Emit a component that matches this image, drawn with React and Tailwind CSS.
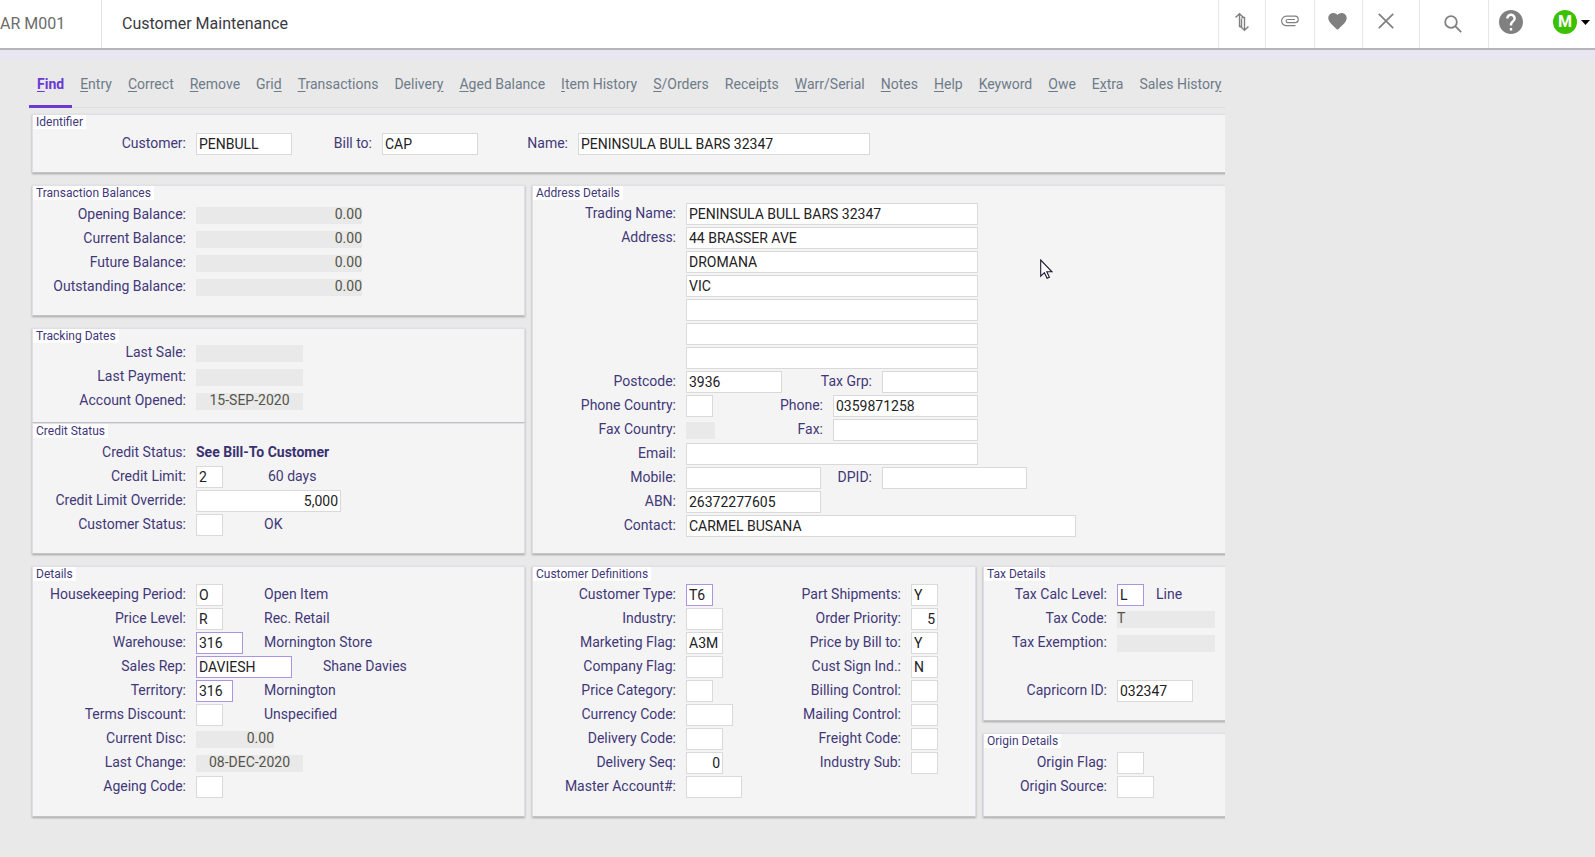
import React, { useId } from "react";

function Label({ htmlFor, width, children }) {
  return (
    <label htmlFor={htmlFor} className={`${width} shrink-0 pr-2.5 pb-0.5 text-right whitespace-nowrap text-[#423879]`}>
      {children}
    </label>
  );
}

/* An editable box, or a flat grey box when `locked`. */
function Field({ label, lw, w, value = "", right, center, locked, link }) {
  const id = useId();
  const align = right ? "text-right" : center ? "text-center" : "text-left";
  const look = locked
    ? "h-[17px] bg-[#e9e9e9] pb-0.5 text-[#55554a]"
    : `h-[22px] border px-0.5 bg-white text-[#222222] ${link ? "border-[#ab94e2]" : "border-[#d9d9d9]"}`;
  return (
    <>
      <Label htmlFor={id} width={lw}>{label}</Label>
      <input
        id={id}
        aria-label={label || "Address line"}
        defaultValue={value}
        readOnly={locked}
        className={`${w} ${look} ${align} shrink-0 outline-none`}
      />
    </>
  );
}

function Row({ children }) {
  return <div className="flex h-6 items-center">{children}</div>;
}

function Hint({ gap = "ml-[41px]", children }) {
  return <span className={`${gap} pb-0.5 whitespace-nowrap text-[#423879]`}>{children}</span>;
}

function Panel({ title, pad = "pt-[17px] pb-4", className = "", children }) {
  return (
    <section
      className={`relative border border-[#dfdfe5] border-b-[#c4c4c8] bg-[#f4f4f4] shadow-[0_1px_2px_rgba(0,0,0,0.3)] ${pad} ${className}`}
    >
      <h2 className="absolute top-0 left-0 bg-white px-[3px] text-[12px] leading-[14px] text-[#423879]">{title}</h2>
      {children}
    </section>
  );
}

const TABS = [
  ["", "F", "ind"],
  ["", "E", "ntry"],
  ["", "C", "orrect"],
  ["", "R", "emove"],
  ["Gri", "d", ""],
  ["", "T", "ransactions"],
  ["Deliver", "y", ""],
  ["", "A", "ged Balance"],
  ["", "I", "tem History"],
  ["", "S", "/Orders"],
  ["Recei", "p", "ts"],
  ["", "W", "arr/Serial"],
  ["", "N", "otes"],
  ["", "H", "elp"],
  ["", "K", "eyword"],
  ["", "O", "we"],
  ["E", "x", "tra"],
  ["Sales Histor", "y", ""],
];

function Tool({ label, className, children }) {
  return (
    <button aria-label={label} className={`flex h-full shrink-0 items-center justify-center text-[#808080] ${className}`}>
      {children}
    </button>
  );
}

function Header() {
  return (
    <header className="flex h-12 shrink-0 items-center bg-white text-[16px] text-[#3a3a44]">
      <div className="flex h-full w-[102px] shrink-0 items-center border-r border-[#e2e2e2] text-[#6c6c6c]">AR M001</div>
      <h1 className="flex-1 pl-5">Customer Maintenance</h1>
      <Tool label="Swap" className="w-[47px] border-l border-[#e6e6e6] pb-1">
        <svg width="16" height="20" viewBox="0 0 16 20" fill="none" stroke="currentColor" strokeWidth="1.4">
          <path d="M1.500 5.500 5.500 1.700 9.500 5.500M5.500 2v12.500H7.500V6.500" />
          <path d="M6.500 14.500 10.500 18.300 14.500 14.500M10.500 18V5.500H7.500" />
        </svg>
      </Tool>
      <Tool label="Attach" className="w-[49px] border-l border-[#e6e6e6] pb-1.5">
        <svg width="18" height="12" viewBox="0 0 18 12" fill="none" stroke="currentColor" strokeWidth="1.200">
          <path d="M14.500 10.600H5.300a4.700 4.700 0 0 1 0-9.400H14a3.250 3.250 0 0 1 0 6.500H6.700a1.600 1.600 0 0 1 0-3.200H14" />
        </svg>
      </Tool>
      <Tool label="Favourite" className="w-12 border-l border-[#e6e6e6] pr-0.5 pb-1.5">
        <svg width="19" height="17" viewBox="2 3 20 18.500" fill="currentColor">
          <path d="M12 21.350l-1.450-1.320C5.400 15.360 2 12.280 2 8.500 2 5.420 4.420 3 7.500 3c1.740 0 3.410.810 4.500 2.090C13.090 3.810 14.760 3 16.500 3 19.580 3 22 5.420 22 8.500c0 3.780-3.400 6.860-8.550 11.540L12 21.350z" />
        </svg>
      </Tool>
      <Tool label="Close" className="w-[57px] border-l border-[#e6e6e6] pr-2.5 pb-1.5">
        <svg width="16" height="16" viewBox="0 0 16 16" fill="none" stroke="currentColor" strokeWidth="1.7">
          <path d="M.8.8l14.400 14.400M15.200.8.8 15.200" />
        </svg>
      </Tool>
      <Tool label="Search" className="w-[69px] border-l border-[#e6e6e6] pr-0.5">
        <svg width="18" height="18" viewBox="0 0 18 18" fill="none" stroke="currentColor" strokeWidth="1.8">
          <circle cx="7" cy="7" r="5.800" />
          <path d="M11.200 11.200l6 6" />
        </svg>
      </Tool>
      <Tool label="Help" className="w-[54px] border-l border-[#e6e6e6] pr-2.5 pb-1">
        <svg width="24" height="24" viewBox="2 2 20 20" fill="currentColor">
          <path d="M12 2C6.480 2 2 6.480 2 12s4.480 10 10 10 10-4.480 10-10S17.520 2 12 2zm1 17h-2v-2h2v2zm2.070-7.750l-.9.920C13.450 12.900 13 13.500 13 15h-2v-.5c0-1.100.450-2.100 1.170-2.830l1.240-1.260c.370-.360.590-.860.590-1.410 0-1.100-.9-2-2-2s-2 .9-2 2H8c0-2.210 1.790-4 4-4s4 1.790 4 4c0 .880-.360 1.680-.930 2.250z" />
        </svg>
      </Tool>
      <button aria-label="Account menu" className="flex h-full shrink-0 items-center gap-1 pr-[5px] pb-1 pl-[11px]">
        <span className="flex size-6 items-center justify-center rounded-full bg-[#3cc100] text-[16px] font-bold text-white">M</span>
        <svg width="9" height="5" viewBox="0 0 9 5" fill="#000000">
          <path d="M0 0h9L4.500 5z" />
        </svg>
      </button>
    </header>
  );
}

function Tabs() {
  return (
    <nav className="-ml-[3px] flex border-b border-[#dddddd] text-[#6e7b88]">
      {TABS.map(([before, key, after], i) => (
        <a
          key={i}
          href="#"
          aria-current={i === 0 ? "page" : undefined}
          className={`-mb-px shrink-0 border-b-[3px] px-2 pt-[15px] pb-[13px] leading-4 whitespace-nowrap ${
            i === 0 ? "border-[#6a3ad2] font-bold text-[#6a3ad2]" : "border-transparent"
          }`}
        >
          {before}
          <span className="underline underline-offset-2">{key}</span>
          {after}
        </a>
      ))}
    </nav>
  );
}

const L1 = "w-[163px]";
const L2 = "w-[153px]";
const L3 = "w-[133px]";
const DEF2 = "w-[168px]";
const TALL = "pt-4 pb-[17px]";

function Pointer() {
  return (
    <svg aria-hidden="true" className="absolute top-[73px] left-[507px]" width="13" height="20" viewBox="0 0 13 20" fill="#ffffff" stroke="#1d1a33" strokeWidth="1.1">
      <path d="M.7 1v16.200l3.700-3.500 2.700 5.600 2.300-1.100-2.600-5.400h5.200z" />
    </svg>
  );
}

export default function App() {
  return (
    <div className="flex min-h-screen flex-col overflow-x-hidden bg-[#e9e9e9] font-['Roboto',sans-serif] text-[14px]">
      <Header />
      <div className="h-[11px] shrink-0 border-t-2 border-[#b4b4b8] bg-[#e8e6f1]" />
      <main className="flex max-w-[1225px] flex-col overflow-x-clip pt-0.5 pb-8 pl-8">
        <Tabs />

        <Panel title="Identifier" className="mt-1.5 -mr-1">
          <Row>
            <Field label="Customer:" lw={L1} w="w-24" value="PENBULL" />
            <Field label="Bill to:" lw="w-[90px]" w="w-24" value="CAP" />
            <Field label="Name:" lw="w-[100px]" w="w-[292px]" value="PENINSULA BULL BARS 32347" />
          </Row>
        </Panel>

        <div className="mt-3 -mr-1 grid grid-cols-[493fr_444fr_246fr] gap-x-[7px] gap-y-3">
          <div className="flex flex-col">
            <Panel title="Transaction Balances" className="mb-3">
              <Row><Field label="Opening Balance:" lw={L1} w="w-[166px]" value="0.00" right locked /></Row>
              <Row><Field label="Current Balance:" lw={L1} w="w-[166px]" value="0.00" right locked /></Row>
              <Row><Field label="Future Balance:" lw={L1} w="w-[166px]" value="0.00" right locked /></Row>
              <Row><Field label="Outstanding Balance:" lw={L1} w="w-[166px]" value="0.00" right locked /></Row>
            </Panel>
            <Panel title="Tracking Dates" pad="pt-3 pb-[9px]">
              <Row><Field label="Last Sale:" lw={L1} w="w-[107px]" locked /></Row>
              <Row><Field label="Last Payment:" lw={L1} w="w-[107px]" locked /></Row>
              <Row><Field label="Account Opened:" lw={L1} w="w-[107px]" value="15-SEP-2020" center locked /></Row>
            </Panel>
            <Panel title="Credit Status" className="flex-1">
              <Row>
                <span className="w-[163px] pr-2.5 pb-0.5 text-right text-[#423879]">Credit Status:</span>
                <strong className="pb-0.5 text-[#3a3170]">See Bill-To Customer</strong>
              </Row>
              <Row><Field label="Credit Limit:" lw={L1} w="w-[27px]" value="2" /><Hint gap="ml-[45px]">60 days</Hint></Row>
              <Row><Field label="Credit Limit Override:" lw={L1} w="w-[145px]" value="5,000" right /></Row>
              <Row><Field label="Customer Status:" lw={L1} w="w-[27px]" /><Hint>OK</Hint></Row>
            </Panel>
          </div>

          <Panel title="Address Details" pad="pt-4 pb-[15px]" className="col-span-2">
            <Row><Field label="Trading Name:" lw={L2} w="w-[292px]" value="PENINSULA BULL BARS 32347" /></Row>
            <Row><Field label="Address:" lw={L2} w="w-[292px]" value="44 BRASSER AVE" /></Row>
            <Row><Field lw={L2} w="w-[292px]" value="DROMANA" /></Row>
            <Row><Field lw={L2} w="w-[292px]" value="VIC" /></Row>
            <Row><Field lw={L2} w="w-[292px]" /></Row>
            <Row><Field lw={L2} w="w-[292px]" /></Row>
            <Row><Field lw={L2} w="w-[292px]" /></Row>
            <Row>
              <Field label="Postcode:" lw={L2} w="w-24" value="3936" />
              <Field label="Tax Grp:" lw="w-[100px]" w="w-24" />
            </Row>
            <Row>
              <Field label="Phone Country:" lw={L2} w="w-[27px]" />
              <Field label="Phone:" lw="w-[120px]" w="w-[145px]" value="0359871258" />
            </Row>
            <Row>
              <Field label="Fax Country:" lw={L2} w="w-[29px]" locked />
              <Field label="Fax:" lw="w-[118px]" w="w-[145px]" />
            </Row>
            <Row><Field label="Email:" lw={L2} w="w-[292px]" /></Row>
            <Row>
              <Field label="Mobile:" lw={L2} w="w-[135px]" />
              <Field label="DPID:" lw="w-[61px]" w="w-[145px]" />
            </Row>
            <Row><Field label="ABN:" lw={L2} w="w-[135px]" value="26372277605" /></Row>
            <Row><Field label="Contact:" lw={L2} w="w-[390px]" value="CARMEL BUSANA" /></Row>
            <Pointer />
          </Panel>

          <Panel title="Details" pad={TALL}>
            <Row><Field label="Housekeeping Period:" lw={L1} w="w-[27px]" value="O" /><Hint>Open Item</Hint></Row>
            <Row><Field label="Price Level:" lw={L1} w="w-[27px]" value="R" /><Hint>Rec. Retail</Hint></Row>
            <Row><Field label="Warehouse:" lw={L1} w="w-[47px]" value="316" link /><Hint gap="ml-[21px]">Mornington Store</Hint></Row>
            <Row><Field label="Sales Rep:" lw={L1} w="w-24" value="DAVIESH" link /><Hint gap="ml-[31px]">Shane Davies</Hint></Row>
            <Row><Field label="Territory:" lw={L1} w="w-[37px]" value="316" link /><Hint gap="ml-[31px]">Mornington</Hint></Row>
            <Row><Field label="Terms Discount:" lw={L1} w="w-[27px]" /><Hint>Unspecified</Hint></Row>
            <Row><Field label="Current Disc:" lw={L1} w="w-[78px]" value="0.00" right locked /></Row>
            <Row><Field label="Last Change:" lw={L1} w="w-[107px]" value="08-DEC-2020" center locked /></Row>
            <Row><Field label="Ageing Code:" lw={L1} w="w-[27px]" /></Row>
          </Panel>

          <Panel title="Customer Definitions" pad={TALL} className="grid grid-cols-[210px_1fr]">
            <div>
              <Row><Field label="Customer Type:" lw={L2} w="w-[27px]" value="T6" link /></Row>
              <Row><Field label="Industry:" lw={L2} w="w-[37px]" /></Row>
              <Row><Field label="Marketing Flag:" lw={L2} w="w-[37px]" value="A3M" /></Row>
              <Row><Field label="Company Flag:" lw={L2} w="w-[37px]" /></Row>
              <Row><Field label="Price Category:" lw={L2} w="w-[27px]" /></Row>
              <Row><Field label="Currency Code:" lw={L2} w="w-[47px]" /></Row>
              <Row><Field label="Delivery Code:" lw={L2} w="w-[37px]" /></Row>
              <Row><Field label="Delivery Seq:" lw={L2} w="w-[37px]" value="0" right /></Row>
              <Row><Field label="Master Account#:" lw={L2} w="w-14" /></Row>
            </div>
            <div>
              <Row><Field label="Part Shipments:" lw={DEF2} w="w-[27px]" value="Y" /></Row>
              <Row><Field label="Order Priority:" lw={DEF2} w="w-[27px]" value="5" right /></Row>
              <Row><Field label="Price by Bill to:" lw={DEF2} w="w-[27px]" value="Y" /></Row>
              <Row><Field label="Cust Sign Ind.:" lw={DEF2} w="w-[27px]" value="N" /></Row>
              <Row><Field label="Billing Control:" lw={DEF2} w="w-[27px]" /></Row>
              <Row><Field label="Mailing Control:" lw={DEF2} w="w-[27px]" /></Row>
              <Row><Field label="Freight Code:" lw={DEF2} w="w-[27px]" /></Row>
              <Row><Field label="Industry Sub:" lw={DEF2} w="w-[27px]" /></Row>
            </div>
          </Panel>

          <div className="flex flex-col gap-3">
            <Panel title="Tax Details" pad={TALL}>
              <Row><Field label="Tax Calc Level:" lw={L3} w="w-[27px]" value="L" link /><Hint gap="ml-3">Line</Hint></Row>
              <Row><Field label="Tax Code:" lw={L3} w="w-[98px]" value="T" locked /></Row>
              <Row><Field label="Tax Exemption:" lw={L3} w="w-[98px]" locked /></Row>
              <div className="h-6" />
              <Row><Field label="Capricorn ID:" lw={L3} w="w-[76px]" value="032347" /></Row>
            </Panel>
            <Panel title="Origin Details" className="flex-1">
              <Row><Field label="Origin Flag:" lw={L3} w="w-[27px]" /></Row>
              <Row><Field label="Origin Source:" lw={L3} w="w-[37px]" /></Row>
            </Panel>
          </div>
        </div>
      </main>
    </div>
  );
}
